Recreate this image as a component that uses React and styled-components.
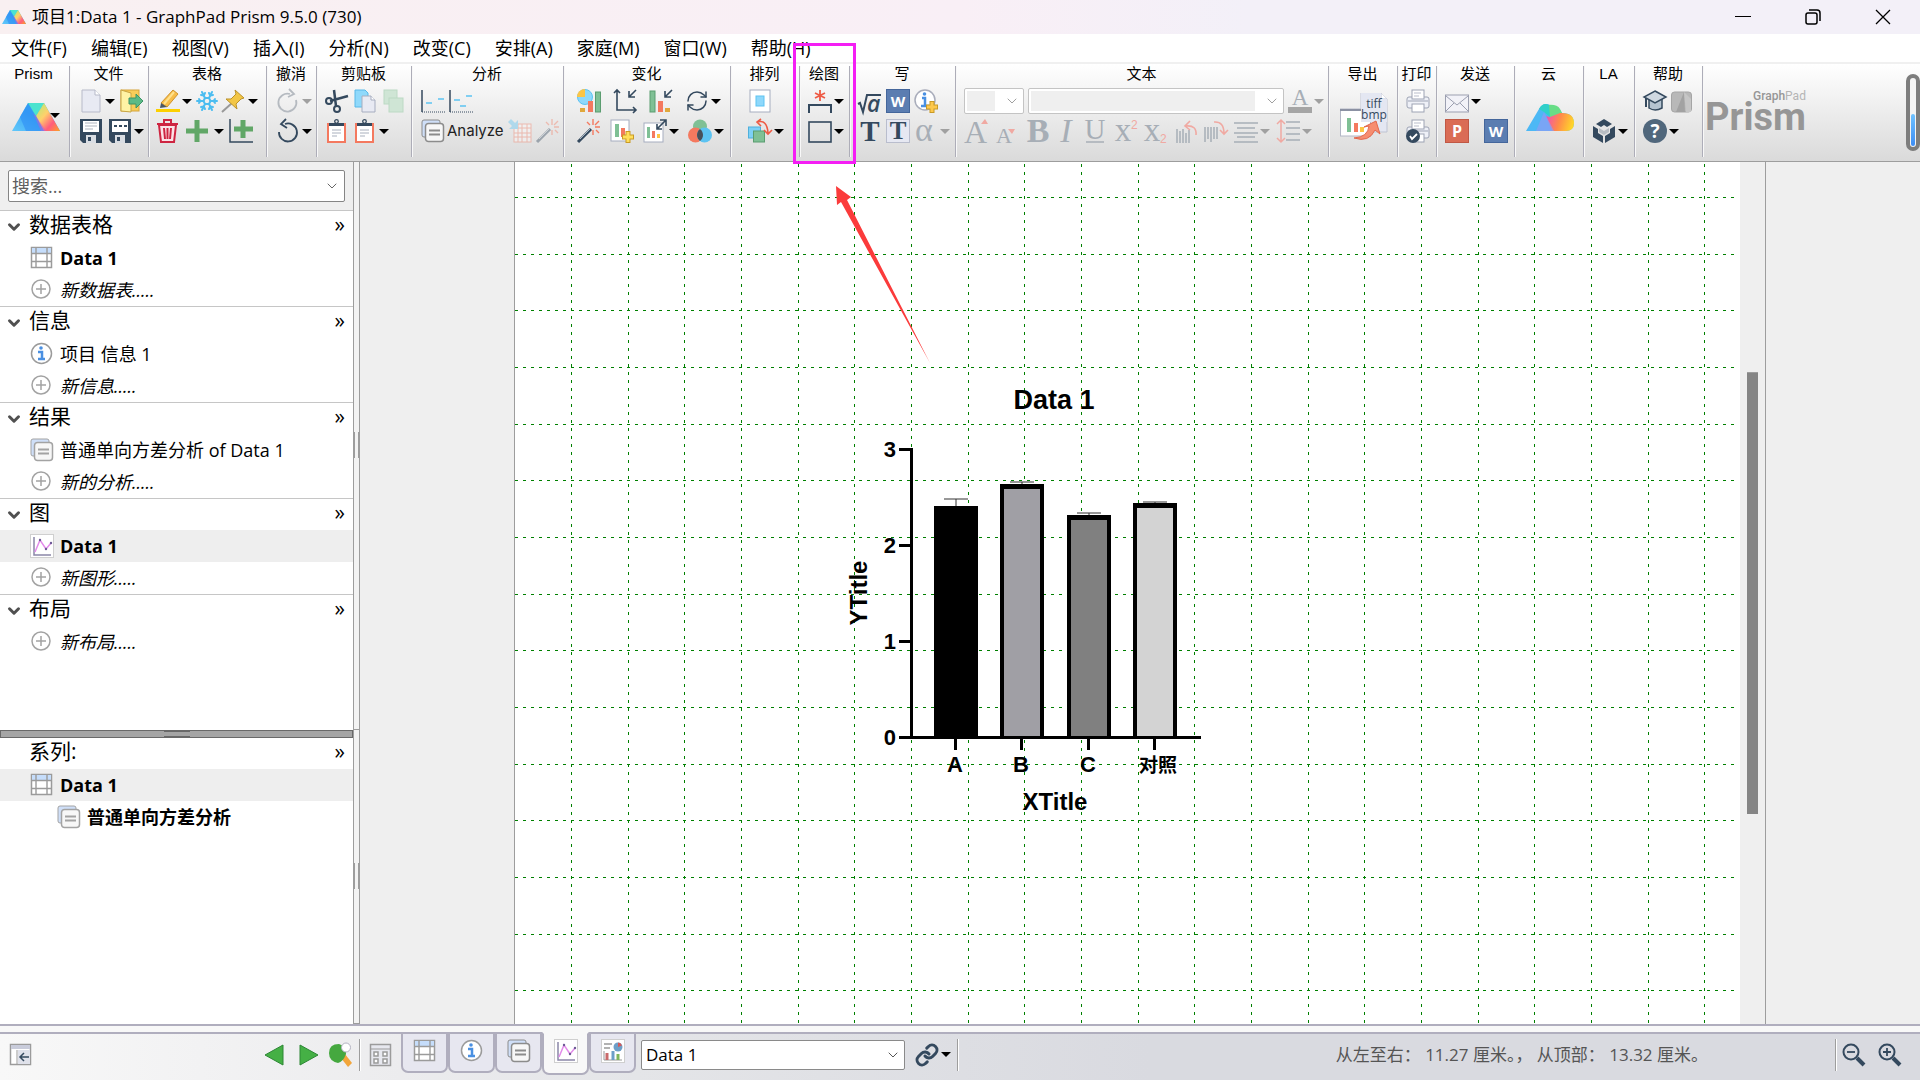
import React from "react";
import styled, { createGlobalStyle, css } from "styled-components";
import { ChevronDown, Link, RefreshCw, Snowflake } from "lucide-react";

const SANS = `"Open Sans", "Noto Sans", "Noto Sans CJK SC", sans-serif`;
const LABEL = `"Liberation Sans", "Noto Sans CJK SC", sans-serif`;

const INK = "#34495e";
const GREEN = "#7fc095";
const CORAL = "#f4795f";
const SKY = "#5cc3f2";
const GOLD = "#fdc544";

const GlobalStyle = createGlobalStyle`
  * {
    box-sizing: border-box;
  }
  body {
    margin: 0;
    font-family: ${SANS};
    color: #000;
  }
  button {
    padding: 0;
    border: 0;
    background: none;
    font: inherit;
    color: inherit;
  }
`;

/* ---------- drawings ---------- */

const PrismMark = () => (
  <>
    <defs>
      <linearGradient id="pmBlue" x1="0" y1="1" x2="1" y2="0">
        <stop offset="0" stopColor="#62c8fa" />
        <stop offset="0.5" stopColor="#3aa5f5" />
        <stop offset="1" stopColor="#33d6e0" />
      </linearGradient>
      <linearGradient id="pmWarm" x1="0" y1="0" x2="1" y2="1">
        <stop offset="0" stopColor="#a8f07a" />
        <stop offset="0.4" stopColor="#ffd06b" />
        <stop offset="0.7" stopColor="#ff5d7d" />
        <stop offset="1" stopColor="#ffa321" />
      </linearGradient>
    </defs>
    <path d="M16 0H32L48 28H0Z" fill="url(#pmBlue)" />
    <path d="M16 0H32L24 13Z" fill="#4be3cf" />
    <path d="M32 0L48 28H32L24 13Z" fill="url(#pmWarm)" />
    <path d="M16 0L32 28H14L8 14Z" fill="#2f8df5" opacity="0.6" />
    <path d="M24 13L34 28H29L21 10Z" fill="#c05bd8" opacity="0.5" />
  </>
);

const PrismCloud = () => (
  <>
    <defs>
      <linearGradient id="pcWarm" x1="0" y1="0.2" x2="1" y2="0.4">
        <stop offset="0" stopColor="#ef4fb8" />
        <stop offset="0.5" stopColor="#ff8a4a" />
        <stop offset="1" stopColor="#ffd52a" />
      </linearGradient>
    </defs>
    <path d="M13 6Q17-1 24 2Q33 3 36 10Q48 10 48 21Q47 28 40 28H0Z" fill="#4db8f5" />
    <path d="M22 2Q31 1 34 6L36 10L24 16Z" fill="#67dd86" />
    <path d="M24 14L34 10Q48 9 48 20Q48 28 40 28H26L20 13Z" fill="url(#pcWarm)" />
    <path d="M13 6Q17-1 23 2L24 14L18 9Z" fill="#30d0c9" />
    <path d="M18 9L28 28H10Z" fill="#8b9df5" opacity="0.7" />
  </>
);

const letter = (text, color, extra) => (
  <text x="12" y="22" textAnchor="middle" fontFamily="Liberation Serif, serif" fontSize="29" fill={color} {...extra}>
    {text}
  </text>
);

const printer = (
  <>
    <rect x="1" y="8" width="22" height="11" rx="2" fill="#eef0f7" stroke="#9da3b4" />
    <rect x="6" y="1" width="12" height="9" fill="#fff" stroke="#9da3b4" />
    <path d="M8 4h7M8 7h5" stroke="#b9bdca" />
    <path d="M2 12h20" stroke="#9da3b4" />
    <rect x="6" y="15" width="12" height="8" fill="#fff" stroke="#9da3b4" />
  </>
);

const clipboard = (
  <>
    <rect x="3" y="5" width="17" height="18" fill="#fff" stroke={CORAL} strokeWidth="2" />
    <rect x="4" y="4" width="15" height="3" fill={INK} />
    <circle cx="11.5" cy="2.5" r="1.8" fill="none" stroke={INK} strokeWidth="1.3" />
    <path d="M7 11h9M7 14h9M7 17h5" stroke="#a9b0bd" />
  </>
);

const sheets = (line) => (
  <>
    <rect x="1" y="1" width="18" height="17" rx="2" fill="#cfdff8" stroke={line} />
    <rect x="4.5" y="4.5" width="18" height="18" rx="3" fill="#f7f7f7" stroke={line} strokeWidth="1.5" />
    <path d="M8 11.5h11M8 15.5h11" stroke={line} strokeWidth="2" />
  </>
);

const wand = (
  <>
    <path d="M1 23L14 10" stroke={INK} strokeWidth="3" />
    <path d="M3 20L13 10" stroke="#aab6c2" />
    <path d="M16 0v6M23 8h-5M22 2l-4 4M10 3l3 3M16 16v-5M22 14l-3-3" stroke={CORAL} strokeWidth="1.4" />
  </>
);

const floppy = (
  <>
    <path d="M1 0h22v24H4l-3-3z" fill={INK} />
    <rect x="4" y="2" width="16" height="11" fill="#fff" />
    <rect x="7" y="16" width="10" height="8" fill="#d9dde3" />
    <rect x="9" y="18" width="3" height="4" fill={INK} />
  </>
);

const glyphs = {
  page: (
    <>
      <path d="M3 1h13l5 5v17H3z" fill="#e8eaf3" stroke="#b7bac9" />
      <path d="M16 1v5h5" fill="#fff" stroke="#b7bac9" />
    </>
  ),
  open: (
    <>
      <rect x="2" y="1" width="18" height="21" fill="#f9cd59" stroke="#d5a43a" />
      <path d="M2 1l10 3v19L2 22z" fill="#fff3a5" stroke="#c7a544" />
      <path d="M10 9h7V5l7 7-7 7v-4h-7z" fill="#5cba86" stroke="#3c9467" />
    </>
  ),
  save: (
    <>
      {floppy}
      <path d="M6 4h12M6 7h12M6 10h8" stroke="#aeb4be" />
    </>
  ),
  saveAs: (
    <>
      {floppy}
      <path d="M6 7h3M11 7h3M16 7h3" stroke={INK} strokeWidth="2" />
    </>
  ),
  marker: (
    <>
      <path d="M17 1l5 4L11 18l-6-4z" fill="#f8bd49" stroke="#cf932c" />
      <path d="M5 14l6 4-7 1z" fill="#4c5763" />
      <path d="M18 3L8 15" stroke="#ffe18c" strokeWidth="2" />
      <rect y="20" width="24" height="3" fill="#fcd000" />
    </>
  ),
  pin: (
    <>
      <path d="M10 14L0 23" stroke="#999" strokeWidth="2" />
      <path d="M13 1l9 8-3 1-5 5 1 5L4 10h5l5-5z" fill="#f2c646" stroke="#bb922b" />
    </>
  ),
  trash: (
    <>
      <path d="M3 6h17l-2 17H5z" fill="#fbe3e7" stroke="#ce2541" strokeWidth="2" />
      <path d="M1 5h21M8 4V1h7v3M8 9l1 11M11.5 9v11M15 9l-1 11" stroke="#ce2541" strokeWidth="2" fill="none" />
    </>
  ),
  plus: <path d="M12 1v22M1 12h22" stroke="#61a767" strokeWidth="5" />,
  axisPlus: (
    <>
      <path d="M1 0v23h23" fill="none" stroke={INK} strokeWidth="1.5" />
      <path d="M14 1v18M5 10h19" stroke="#61a767" strokeWidth="5" />
    </>
  ),
  redo: (
    <>
      <path d="M20 11A9 9 0 1 1 14 5" fill="none" stroke="#b5bac0" strokeWidth="1.8" />
      <path d="M13 0l5 5-6 3" fill="none" stroke="#b5bac0" strokeWidth="1.8" />
    </>
  ),
  undo: (
    <>
      <path d="M3 13A9 9 0 1 0 9 5" fill="none" stroke={INK} strokeWidth="1.8" />
      <path d="M10 0L5 5l6 4" fill="none" stroke={INK} strokeWidth="1.8" />
    </>
  ),
  cut: (
    <>
      <path d="M5 12L23 7M11 17L9 1" stroke={INK} strokeWidth="2.5" />
      <circle cx="4" cy="12" r="3" fill="none" stroke={INK} strokeWidth="2" />
      <circle cx="12" cy="20" r="3" fill="none" stroke={INK} strokeWidth="2" />
    </>
  ),
  copy: (
    <>
      <path d="M2 1h10l3 3v14H2z" fill="#8fd9fb" stroke="#58b8e8" />
      <path d="M9 7h9l4 4v12H9z" fill="#e8eaf3" stroke="#a6adbf" />
      <path d="M18 7v4h4" fill="#fff" stroke="#a6adbf" />
    </>
  ),
  duplicate: (
    <>
      <rect x="3" y="1" width="13" height="14" fill="#cfe5d5" stroke="#bcd9c4" />
      <rect x="8" y="9" width="14" height="14" fill="#cfe5d5" stroke="#bcd9c4" />
    </>
  ),
  clipboard,
  plotOne: (
    <>
      <path d="M1 1v22" stroke={INK} strokeWidth="1.5" />
      <path d="M1 23h23" stroke={INK} strokeDasharray="1 1" />
      <path d="M5 14h6M17 10h6" stroke={SKY} strokeWidth="1.5" />
    </>
  ),
  plotTwo: (
    <>
      <path d="M1 1v22" stroke={INK} strokeWidth="1.5" />
      <path d="M1 23h23" stroke={INK} strokeDasharray="1 1" />
      <path d="M5 11h6M11 17h6M17 7h6" stroke={SKY} strokeWidth="1.5" />
    </>
  ),
  sheets: sheets("#8c8c8c"),
  results: sheets("#a3a3a3"),
  gridFill: (
    <g opacity="0.4">
      <rect x="6" y="5" width="17" height="18" fill="#fff" stroke={CORAL} />
      <path d="M6 9h17M6 14h17M6 18h17M10 5v18M14 5v18M19 5v18" stroke={CORAL} />
      <path d="M0 3l3-3 4 4 3-3v9H1l3-3z" fill={SKY} />
    </g>
  ),
  wand,
  wandOff: <g opacity="0.4">{wand}</g>,
  chartMix: (
    <>
      <circle cx="8" cy="8" r="7.5" fill="#8ed8fb" stroke={SKY} />
      <path d="M8 8V0A8 8 0 0 0 0 8z" fill={GOLD} />
      <rect x="3" y="19" width="5" height="4" fill="#e0a83c" />
      <rect x="11" y="12" width="5" height="11" fill={CORAL} />
      <rect x="18.5" y="3" width="5" height="20" fill={GREEN} stroke="#5b9d70" />
    </>
  ),
  axes: (
    <g fill="none" stroke={INK} strokeWidth="1.6">
      <path d="M4 1v20h19M1 4l3-3 3 3M20 18l3 3-3 3M23 1l-7 7M16 2v6h6" />
    </g>
  ),
  barArrow: (
    <>
      <rect x="1" y="2" width="5" height="21" fill={GREEN} stroke="#5b9d70" />
      <rect x="9" y="12" width="5" height="11" fill={CORAL} />
      <rect x="16" y="19" width="5" height="4" fill="#e0a83c" />
      <path d="M23 1l-7 7M16 2v6h6" fill="none" stroke={INK} strokeWidth="1.6" />
    </>
  ),
  graphAdd: (
    <>
      <rect x="1" y="1" width="18" height="21" fill="#fff" stroke="#a6adbf" />
      <rect x="5" y="5" width="4" height="13" fill={GREEN} />
      <rect x="11" y="9" width="4" height="9" fill={CORAL} />
      <path d="M18 12v12M12 18h12" stroke="#c99a25" strokeWidth="5" />
      <path d="M18 13v10M13 18h10" stroke="#ffdf5b" strokeWidth="3" />
    </>
  ),
  graphResize: (
    <>
      <rect x="1" y="4" width="19" height="19" fill="#fff" stroke="#a6adbf" />
      <rect x="4" y="8" width="3" height="11" fill={GREEN} />
      <rect x="9" y="12" width="3" height="7" fill={CORAL} />
      <rect x="14" y="15" width="3" height="4" fill={GOLD} />
      <path d="M14 10L23 1M17 1h6v6M14 5v5h5" fill="none" stroke={INK} strokeWidth="1.6" />
    </>
  ),
  venn: (
    <>
      <circle cx="12" cy="7.5" r="7" fill={GREEN} />
      <circle cx="7.5" cy="16" r="7.5" fill={CORAL} />
      <circle cx="16.5" cy="16" r="7.5" fill={SKY} />
      <path d="M12 10a7.5 7.5 0 0 1 0 12a7.5 7.5 0 0 1 0-12z" fill="#47505a" />
    </>
  ),
  frame: (
    <>
      <rect x="2" y="1" width="20" height="22" fill="#fff" stroke="#a6adbf" />
      <rect x="8" y="7" width="8" height="10" fill="#8ed8fb" stroke={SKY} />
    </>
  ),
  rotate: (
    <>
      <rect x="0.5" y="8" width="12" height="11" fill="#7dd0f6" stroke="#4fb0dc" />
      <rect x="5.5" y="12" width="11" height="11" fill={GREEN} stroke="#5b9d70" />
      <path d="M9 3Q19 0 20 14M16 11l4 4 4-4M13 0L9 3l4 4" fill="none" stroke="#ee5a44" strokeWidth="1.6" />
    </>
  ),
  bracket: (
    <>
      <path d="M1 24v-8h22v8" fill="none" stroke={INK} strokeWidth="2" />
      <path d="M12 1v11M7 4l10 5M17 4L7 9" stroke="#ee5a44" strokeWidth="1.8" />
    </>
  ),
  rect: <rect x="1" y="3" width="22" height="20" fill="none" stroke={INK} strokeWidth="1.6" />,
  root: (
    <>
      <path d="M0 15l2-1 3 9L9 6h14" fill="none" stroke={INK} strokeWidth="2" />
      <text x="9" y="23" fontFamily="Open Sans, sans-serif" fontSize="23" fontStyle="italic" fontWeight="600" fill={INK}>
        a
      </text>
    </>
  ),
  word: (
    <>
      <rect width="24" height="24" fill="#44669b" />
      <rect x="1" y="1" width="22" height="22" fill="#5b7db1" />
      <text x="12" y="18" textAnchor="middle" fontFamily="Open Sans, sans-serif" fontSize="15" fontWeight="bold" fill="#fff">
        W
      </text>
    </>
  ),
  ppt: (
    <>
      <rect width="24" height="24" fill="#c05845" />
      <rect x="1" y="1" width="22" height="22" fill="#da6c55" />
      <text x="12" y="18" textAnchor="middle" fontFamily="Open Sans, sans-serif" fontSize="16" fontWeight="bold" fill="#fff">
        P
      </text>
    </>
  ),
  infoAdd: (
    <>
      <circle cx="11" cy="11" r="10" fill="#fff" stroke="#a9adbb" strokeWidth="1.5" />
      <circle cx="10.5" cy="5" r="1.8" fill="#4a90e2" />
      <path d="M8 9h3v8M7 17h8" stroke="#4a90e2" strokeWidth="2.5" fill="none" />
      <path d="M18 12v12M12 18h12" stroke="#c99a25" strokeWidth="5" />
      <path d="M18 13v10M13 18h10" stroke="#fdc84c" strokeWidth="3" />
    </>
  ),
  text: letter("T", INK, { fontWeight: "bold" }),
  textBox: (
    <>
      <rect x="0.5" y="0.5" width="23" height="23" fill="#e6e8f2" stroke="#b9bdcd" />
      <text x="12" y="20" textAnchor="middle" fontFamily="Liberation Serif, serif" fontSize="25" fontWeight="bold" fill={INK}>
        T
      </text>
    </>
  ),
  alpha: letter("α", "#a7aeb6", { x: 10, fontSize: 34 }),
  fontColor: (
    <>
      <text x="12" y="16" textAnchor="middle" fontFamily="Liberation Serif, serif" fontSize="23" fill="#a7aeb6">
        A
      </text>
      <rect y="18" width="24" height="6" fill="#a5a5a5" />
    </>
  ),
  grow: (
    <>
      <text x="0" y="24" fontFamily="Liberation Serif, serif" fontSize="32" fill="#a7aeb6">
        A
      </text>
      <path d="M17 5l4-5 3 5z" fill="#f0a9a2" />
    </>
  ),
  shrink: (
    <>
      <text x="2" y="24" fontFamily="Liberation Serif, serif" fontSize="22" fill="#a7aeb6">
        A
      </text>
      <path d="M14 10h7l-3 5z" fill="#f0a9a2" />
    </>
  ),
  bold: letter("B", "#a7aeb6", { fontWeight: "bold", x: 14, y: 23, fontSize: 34 }),
  italic: letter("I", "#a7aeb6", { fontStyle: "italic", y: 23, fontSize: 34 }),
  underline: (
    <>
      {letter("U", "#a7aeb6", { x: 11, y: 20 })}
      <path d="M2 23h18" stroke="#a7aeb6" strokeWidth="1.5" />
    </>
  ),
  sup: (
    <>
      {letter("x", "#a7aeb6", { x: 9, fontSize: 33 })}
      <text x="17" y="10" fontFamily="Liberation Sans, sans-serif" fontSize="12" fill="#f0a9a2">
        2
      </text>
    </>
  ),
  sub: (
    <>
      {letter("x", "#a7aeb6", { x: 8, fontSize: 33 })}
      <text x="16" y="24" fontFamily="Liberation Sans, sans-serif" fontSize="12" fill="#f0a9a2">
        2
      </text>
    </>
  ),
  turnLeft: (
    <>
      <path d="M3 10v14M6 12v12M9 10v14M12 14v10M15 11v13" stroke="#a7aeb6" strokeWidth="1.5" />
      <path d="M22 16Q23 6 12 7M16 2l-5 5 5 4" fill="none" stroke="#f0a9a2" strokeWidth="1.6" />
    </>
  ),
  turnRight: (
    <>
      <path d="M1 8v15M4 8v12M7 8v15M10 8v12M13 8v12" stroke="#a7aeb6" strokeWidth="1.5" />
      <path d="M10 3Q20 2 20 15M16 11l4 4 4-4" fill="none" stroke="#f0a9a2" strokeWidth="1.6" />
    </>
  ),
  align: <path d="M0 4h24M3 9h18M0 14h24M3 18h18M0 23h24" stroke="#a7aeb6" strokeWidth="1.5" />,
  spacing: (
    <>
      <path d="M10 3h14M10 9h14M10 15h14M10 21h14" stroke="#a7aeb6" strokeWidth="1.5" />
      <path d="M5 1v22M1 5l4-4 4 4M1 19l4 4 4-4" fill="none" stroke="#f0a9a2" strokeWidth="1.5" />
    </>
  ),
  printer,
  printCheck: (
    <>
      {printer}
      <circle cx="7" cy="17" r="7" fill={INK} />
      <path d="M4 17l2 3 5-5" fill="none" stroke="#fff" strokeWidth="1.8" />
    </>
  ),
  mail: (
    <>
      <rect x="0.5" y="6" width="23" height="17" fill="#f2f2f8" stroke="#9b9fb0" />
      <path d="M1 7l11 9L23 7M1 22l8-8M23 22l-8-8" fill="none" stroke="#9b9fb0" />
    </>
  ),
  cube: (
    <>
      <path d="M12 0l8 5-5 3-3-2-3 2-5-3z" fill={INK} />
      <path d="M1 7l5 3v4l5 3v7L1 18zM23 7l-5 3v4l-5 3v7l10-6z" fill={INK} />
      <path d="M7 9l5 3 5-3v4l-5 3-5-3z" fill={INK} opacity="0.25" />
    </>
  ),
  cap: (
    <>
      <path d="M6 10v9q6 4 13 0v-9" fill="#b6c4d1" stroke={INK} strokeWidth="1.5" />
      <path d="M12 2l11 6-11 6L1 8z" fill="#cfd8e1" stroke={INK} strokeWidth="1.5" />
      <path d="M3 9v9" stroke={INK} strokeWidth="2" />
    </>
  ),
  gem: (
    <>
      <rect x="0.5" y="3" width="20" height="20" rx="3" fill="#b8b8b8" stroke="#a5a5a5" />
      <path d="M13 3L5 23h9z" fill="#a2a2a2" />
      <path d="M13 3l2 20h5V10z" fill="#c6c6c6" />
    </>
  ),
  help: (
    <>
      <circle cx="12" cy="12" r="12" fill="#50677c" />
      <text x="12" y="19" textAnchor="middle" fontFamily="Open Sans, sans-serif" fontSize="19" fontWeight="bold" fill="#fff">
        ?
      </text>
    </>
  ),
  table: (
    <>
      <rect x="1.5" y="1.5" width="20" height="20" fill="#fff" stroke="#9b9b9b" strokeWidth="1.5" />
      <rect x="2" y="2" width="19" height="5" fill="#c5ddfb" />
      <path d="M6 1v21M17 1v21M1 7.5h21M1 15.5h21" stroke="#9b9b9b" strokeWidth="1.4" />
    </>
  ),
  add: (
    <>
      <circle cx="11" cy="11" r="9" fill="#fff" stroke="#a3a3a3" strokeWidth="1.5" />
      <path d="M11 6v10M6 11h10" stroke="#a3a3a3" strokeWidth="1.5" />
    </>
  ),
  info: (
    <>
      <circle cx="11.5" cy="11.5" r="10" fill="#fff" stroke="#9b9b9b" strokeWidth="1.5" />
      <circle cx="11" cy="6" r="1.8" fill="#4a90e2" />
      <path d="M8 10h4v7M8 17h7" stroke="#4a90e2" strokeWidth="2.5" fill="none" />
    </>
  ),
  graph: (
    <>
      <rect x="0.5" y="0.5" width="23" height="23" fill="#fff" stroke="#cfcfcf" />
      <path d="M4 3v18h17" fill="none" stroke="#8b86a8" strokeWidth="1.5" />
      <path d="M5 18l5-12 6 9 5-6" fill="none" stroke="#e28bea" strokeWidth="1.5" />
      <circle cx="10" cy="6" r="1.2" fill="#6d5a95" />
      <circle cx="16" cy="15" r="1.2" fill="#6d5a95" />
      <circle cx="21" cy="9" r="1.2" fill="#6d5a95" />
    </>
  ),
  layout: (
    <>
      <rect x="0.5" y="0.5" width="23" height="23" fill="#fff" stroke="#cfcfcf" />
      <circle cx="17" cy="8" r="4.5" fill="#6d9fc8" />
      <path d="M17 8V3.5a4.5 4.5 0 0 1 4 3z" fill="#d25a5a" />
      <path d="M3 5h8M3 9h6" stroke="#999" strokeWidth="1.5" />
      <path d="M3 12v9h18" stroke="#999" fill="none" />
      <path d="M6 14v7" stroke="#c96a6a" strokeWidth="3" />
      <path d="M12 12v9" stroke="#6d9fc8" strokeWidth="3" />
      <path d="M17 15v6" stroke="#7eb55d" strokeWidth="3" />
    </>
  ),
  collapse: (
    <>
      <rect x="1.5" y="1.5" width="20" height="20" fill="#fff" stroke="#9b9b9b" strokeWidth="1.5" />
      <path d="M2 4h19" stroke="#c9ccdb" strokeWidth="4" />
      <path d="M8 7v14" stroke="#9b9b9b" />
      <rect x="9" y="7" width="12" height="14" fill="#dfe1ea" />
      <path d="M20 14h-9M15 10l-4 4 4 4" fill="none" stroke={INK} strokeWidth="1.5" />
    </>
  ),
  prev: <path d="M20 2v20L2 12z" fill="#45b045" stroke="#2d8735" />,
  next: <path d="M5 2v20L23 12z" fill="#45b045" stroke="#2d8735" />,
  paddle: (
    <>
      <path d="M14 15l4-4 7 9-4 4z" fill="#f2a53b" />
      <path d="M2 10Q2 1 12 1Q20 3 19 11Q16 19 11 20Q2 18 2 10z" fill="#45a83f" />
      <circle cx="19" cy="4.5" r="4.5" fill="#fff" stroke="#b3b3c2" />
    </>
  ),
  calendar: (
    <>
      <rect x="1.5" y="1.5" width="20" height="21" fill="#e7e8ef" stroke="#9b9b9b" strokeWidth="1.5" />
      <path d="M2 6h19" stroke="#9b9b9b" />
      <path d="M5 9h4v4H5zM14 9h4v4h-4zM5 16h4v4H5zM14 16h4v4h-4z" fill="#fff" stroke="#9b9b9b" strokeWidth="1.5" />
    </>
  ),
  zoomOut: (
    <>
      <circle cx="9" cy="9" r="7.5" fill="none" stroke={INK} strokeWidth="2" />
      <path d="M5 9h8" stroke={INK} strokeWidth="1.8" />
      <path d="M15 15l7 7" stroke={INK} strokeWidth="4" />
    </>
  ),
  zoomIn: (
    <>
      <circle cx="9" cy="9" r="7.5" fill="none" stroke={INK} strokeWidth="2" />
      <path d="M5 9h8M9 5v8" stroke={INK} strokeWidth="1.8" />
      <path d="M15 15l7 7" stroke={INK} strokeWidth="4" />
    </>
  ),
};

const Svg = styled.svg`
  display: block;
  flex: none;
`;

const Icon = ({ name }) => (
  <Svg width="24" height="24" viewBox="0 0 24 24" overflow="visible">
    {glyphs[name]}
  </Svg>
);

/* ---------- window frame ---------- */

const Window = styled.div`
  display: flex;
  flex-direction: column;
  height: 100vh;
  min-height: 900px;
  overflow: hidden;
  background: #efefef;
`;

const TitleBar = styled.header`
  display: flex;
  align-items: center;
  height: 34px;
  padding: 0 29px 0 2px;
  background: linear-gradient(90deg, #f9f0f1 0%, #f9eff6 50%, #f3f0f8 65%);
`;

const WindowTitle = styled.h1`
  flex: 1;
  margin: 0 0 0 6px;
  font-size: 17px;
  line-height: 24px;
  font-weight: 400;
`;

const WindowButtons = styled.div`
  display: flex;
  gap: 54px;
  & svg {
    display: block;
    fill: none;
    stroke: #000;
  }
`;

const MenuBar = styled.nav`
  display: flex;
  align-items: center;
  gap: 24px;
  height: 30px;
  padding: 0 11px;
  background: #fff;
  border-bottom: 2px solid #f0f0f0;
`;

const MenuButton = styled.button`
  font-size: 18px;
  line-height: 24px;
  white-space: nowrap;
`;

const menus = [
  "文件(F)",
  "编辑(E)",
  "视图(V)",
  "插入(I)",
  "分析(N)",
  "改变(C)",
  "安排(A)",
  "家庭(M)",
  "窗口(W)",
  "帮助(H)",
];

/* ---------- ribbon ---------- */

const Ribbon = styled.div`
  display: flex;
  flex: none;
  height: 98px;
  background: linear-gradient(#ffffff, #f0f0f0 40%, #dadada);
  border-bottom: 1px solid #9d9d9d;
`;

const Group = styled.section`
  position: relative;
  flex: none;
  width: ${(props) => props.$width}px;
  padding-left: ${(props) => props.$pad}px;
  &::after {
    content: "";
    position: absolute;
    top: 2px;
    right: 0;
    bottom: 4px;
    width: 2px;
    background: linear-gradient(90deg, #adadb8 50%, #f8f8f8 50%);
  }
`;

const GroupTitle = styled.h2`
  margin: 0 4px 5px -${(props) => props.$pad}px;
  font-family: ${LABEL};
  font-size: 15px;
  line-height: 20px;
  font-weight: 400;
  text-align: center;
`;

const ToolRow = styled.div`
  display: flex;
  align-items: center;
  gap: ${(props) => props.$gap || 4}px;
  height: 24px;
  margin-bottom: 6px;
`;

const TallRow = styled(ToolRow)`
  height: 56px;
`;

const Tool = styled.button`
  position: relative;
  display: flex;
  align-items: center;
  gap: 2px;
`;

const Caret = styled.span`
  width: 10px;
  border: 5px solid transparent;
  border-top-color: ${(props) => (props.$off ? "#a0a0a0" : "#000")};
  border-bottom: 0;
`;

// sits on the slope of the big logo
const LogoCaret = styled(Caret)`
  position: absolute;
  top: 10px;
  right: 0;
`;

const AnalyzeText = styled.span`
  font-family: Inter, sans-serif;
  font-size: 15px;
  line-height: 24px;
  color: #222;
`;

const SelectBox = styled.span`
  position: relative;
  flex: none;
  width: ${(props) => props.$width}px;
  & > svg {
    position: absolute;
    top: 50%;
    right: 4px;
    transform: translateY(-50%);
    pointer-events: none;
  }
`;

const Select = styled.select`
  display: block;
  width: 100%;
  appearance: none;
  height: ${(props) => (props.$small ? 26 : 30)}px;
  padding: 0 4px;
  border: 1px solid ${(props) => (props.$small ? "#c4c4c4" : "#8a8a8a")};
  border-radius: 2px;
  background: #fff;
  color: #000;
  opacity: 1;
  font-family: ${SANS};
  font-size: 17px;
  ${(props) =>
    props.$small &&
    css`
      background: linear-gradient(#efefef, #efefef) 2px 2px / calc(100% - 30px) 20px no-repeat #fff;
    `}
`;

const Highlight = styled.div`
  position: absolute;
  z-index: 2;
  top: -21px;
  right: -5px;
  bottom: -3px;
  left: -8px;
  border: 3px solid #f41ef4;
  pointer-events: none;
`;

const Brand = styled.div`
  flex: 1;
  padding: 26px 0 0 1px;
  font-family: Roboto, sans-serif;
  color: #969696;
`;

const BrandInner = styled.div`
  display: grid;
  width: 98px;
  text-align: right;
`;

const BrandSmall = styled.span`
  font-size: 12px;
  line-height: 12px;
  font-weight: 500;
  & em {
    font-style: normal;
    font-weight: 400;
    color: #b4b4b4;
  }
`;

const BrandLarge = styled.span`
  font-size: 38px;
  line-height: 30px;
  font-weight: 700;
  text-align: left;
`;

const Gauge = styled.div`
  flex: none;
  display: flex;
  align-items: flex-end;
  width: 14px;
  height: 77px;
  margin-top: 10px;
  padding: 1px;
  border: 4px solid #7d7d7d;
  border-radius: 7px;
  background: #f4f4f4;
  &::after {
    content: "";
    width: 100%;
    height: 32px;
    border-radius: 2px;
    background: linear-gradient(#6fc2ff, #3c8df5);
  }
`;

// a trailing + draws a drop-down caret, a trailing - a disabled one
const groups = [
  { title: "文件", width: 79, pad: 8, rows: [{ gap: 4, items: ["page+", "open"] }, { gap: 5, items: ["save", "saveAs+"] }] },
  {
    title: "表格",
    width: 118,
    pad: 6,
    rows: [
      { gap: 3, items: ["marker+", "snow", "pin+"] },
      { gap: 5, items: ["trash", "plus", "caret", "axisPlus"] },
    ],
  },
  { title: "撤消", width: 50, pad: 8, rows: [{ items: ["redo-"] }, { items: ["undo+"] }] },
  { title: "剪贴板", width: 95, pad: 7, rows: [{ items: ["cut", "copy", "duplicate"] }, { items: ["clipboard", "clipboard+"] }] },
  { title: "分析", width: 152, pad: 8, rows: [{ items: ["plotOne", "plotTwo"] }, { items: ["analyze", "gridFill", "wandOff"] }] },
  {
    title: "变化",
    width: 167,
    pad: 12,
    rows: [
      { gap: 12, items: ["chartMix", "axes", "barArrow", "cycle+"] },
      { gap: 9, items: ["wand", "graphAdd", "graphResize+", "venn+"] },
    ],
  },
  { title: "排列", width: 69, pad: 16, rows: [{ items: ["frame"] }, { items: ["rotate+"] }] },
  { title: "绘图", width: 50, pad: 7, marked: true, rows: [{ items: ["bracket+"] }, { items: ["rect+"] }] },
  { title: "写", width: 106, pad: 7, rows: [{ items: ["root", "word", "infoAdd"] }, { items: ["text", "textBox", "alpha-"] }] },
  {
    title: "文本",
    width: 373,
    pad: 7,
    rows: [
      { items: ["fontSize", "fontName", "fontColor-"] },
      {
        gap: 6,
        items: ["grow", "shrink", "bold", "italic", "underline", "sup", "sub", "turnLeft", "turnRight", "align-", "spacing-"],
      },
    ],
  },
  { title: "导出", width: 69, pad: 10, tall: "export" },
  { title: "打印", width: 39, pad: 7, rows: [{ items: ["printer"] }, { items: ["printCheck"] }] },
  { title: "发送", width: 78, pad: 7, rows: [{ items: ["mail+"] }, { gap: 15, items: ["ppt", "word"] }] },
  { title: "云", width: 69, pad: 10, tall: "cloud" },
  { title: "LA", width: 51, pad: 7, rows: [{ items: [] }, { items: ["cube+"] }] },
  { title: "帮助", width: 68, pad: 7, rows: [{ items: ["cap", "gem"] }, { items: ["help+"] }] },
];

const ExportArt = () => (
  <Svg width="48" height="48" viewBox="0 0 48 48">
    <path d="M21 0h20l6 6v33H21z" fill="#e4e7f2" stroke="#bfc3d2" />
    <path d="M41 0v6h6" fill="#fff" stroke="#bfc3d2" />
    <rect x="0.5" y="16" width="30" height="27" fill="#fff" stroke="#b3b7c6" />
    <path d="M0 17h22" stroke="#8b91a3" strokeWidth="2" />
    <rect x="7" y="25" width="4" height="14" fill={GREEN} />
    <rect x="14" y="30" width="4" height="9" fill={CORAL} />
    <rect x="20" y="34" width="4" height="5" fill={GOLD} />
    <path d="M21 0h20v6h6v23H21z" fill="#e4e7f2" />
    <text x="34" y="15" textAnchor="middle" fontFamily="Open Sans, sans-serif" fontSize="12" fill={INK}>
      tiff
    </text>
    <text x="34" y="26" textAnchor="middle" fontFamily="Open Sans, sans-serif" fontSize="12" fill={INK}>
      bmp
    </text>
    <path d="M14 45q14-1 15-12l-5 1 12-6 4 13-5-4q-6 13-21 8z" fill="#f68d70" stroke="#e2674c" />
  </Svg>
);

const ToolItem = ({ id }) => {
  const caret = /[+-]$/.test(id);
  const name = id.replace(/[+-]$/, "");
  if (name === "caret") {
    return <Caret />;
  }
  if (name === "fontSize" || name === "fontName") {
    return (
      <SelectBox $width={name === "fontSize" ? 60 : 256}>
        <Select $small disabled aria-label={name} />
        <ChevronDown size={16} color="#a0a0a0" strokeWidth={1.5} />
      </SelectBox>
    );
  }
  return (
    <Tool type="button" aria-label={name}>
      {name === "snow" && <Snowflake size={24} color="#4cbdf0" strokeWidth={2} />}
      {name === "cycle" && <RefreshCw size={24} color={INK} strokeWidth={1.5} />}
      {name === "analyze" && (
        <>
          <Icon name="sheets" />
          <AnalyzeText>Analyze</AnalyzeText>
        </>
      )}
      {glyphs[name] && <Icon name={name} />}
      {caret && <Caret $off={id.endsWith("-")} />}
    </Tool>
  );
};

const RibbonBar = () => (
  <Ribbon>
    <Group $width={71} $pad={12}>
      <GroupTitle $pad={12}>Prism</GroupTitle>
      <TallRow>
        <Tool type="button" aria-label="Prism">
          <Svg width="48" height="28" viewBox="0 0 48 28">
            <PrismMark />
          </Svg>
          <LogoCaret />
        </Tool>
      </TallRow>
    </Group>
    {groups.map((group) => (
      <Group key={group.title} $width={group.width} $pad={group.pad}>
        <GroupTitle $pad={group.pad}>{group.title}</GroupTitle>
        {group.tall && (
          <TallRow>
            <Tool type="button" aria-label={group.tall}>
              {group.tall === "export" ? (
                <ExportArt />
              ) : (
                <Svg width="48" height="28" viewBox="0 0 48 28">
                  <PrismCloud />
                </Svg>
              )}
            </Tool>
          </TallRow>
        )}
        {group.rows &&
          group.rows.map((row, i) => (
            <ToolRow key={i} $gap={row.gap}>
              {row.items.map((id) => (
                <ToolItem key={id} id={id} />
              ))}
            </ToolRow>
          ))}
        {group.marked && <Highlight />}
      </Group>
    ))}
    <Brand>
      <BrandInner>
        <BrandSmall>
          Graph<em>Pad</em>
        </BrandSmall>
        <BrandLarge>Prism</BrandLarge>
      </BrandInner>
    </Brand>
    <Gauge />
  </Ribbon>
);

/* ---------- navigator ---------- */

const Main = styled.main`
  display: flex;
  flex: 1;
  min-height: 0;
`;

const Navigator = styled.aside`
  display: flex;
  flex-direction: column;
  flex: none;
  width: 353px;
  background: #fff;
`;

const SearchArea = styled.div`
  position: relative;
  padding: 8px;
  background: #efefef;
  border-bottom: 1px solid #c6c6c6;
  & > svg {
    position: absolute;
    top: 16px;
    right: 13px;
  }
`;

const SearchInput = styled.input`
  display: block;
  width: 100%;
  height: 32px;
  padding: 0 3px;
  border: 1px solid #858585;
  border-radius: 2px;
  background: #fff;
  font-family: ${SANS};
  font-size: 18px;
  &::placeholder {
    color: #606060;
    opacity: 1;
  }
`;

const Section = styled.section`
  border-bottom: ${(props) => (props.$last ? 0 : 1)}px solid #c6c6c6;
`;

const SectionHead = styled.div`
  display: flex;
  align-items: center;
  height: 31px;
  padding: 0 8px 0 5px;
`;

const SectionName = styled.h2`
  flex: 1;
  margin: 0 0 0 ${(props) => (props.$plain ? 24 : 6)}px;
  padding-bottom: 5px;
  font-size: 21px;
  line-height: 26px;
  font-weight: 400;
`;

const More = styled.button`
  padding-bottom: 5px;
  font-size: 21px;
  line-height: 26px;
`;

const Row = styled.button`
  display: flex;
  align-items: center;
  gap: 6px;
  width: 100%;
  height: 32px;
  padding: 0 0 1px ${(props) => (props.$deep ? 57 : 30)}px;
  background: ${(props) => (props.$active ? "#eeeeee" : "transparent")};
  font-size: 18px;
  line-height: 24px;
  font-weight: ${(props) => (props.$bold ? 700 : 400)};
  font-style: ${(props) => (props.$fresh ? "italic" : "normal")};
  text-align: left;
  white-space: nowrap;
`;

const SplitBar = styled.div`
  display: grid;
  place-items: center;
  height: 8px;
  margin-top: auto;
  border: 1px solid #696969;
  background: #a5a5a5;
  &::after {
    content: "";
    width: 26px;
    height: 4px;
    border: solid #696969;
    border-width: 1px 0;
  }
`;

const Upper = styled.div`
  display: flex;
  flex-direction: column;
  height: 527px;
`;

const Splitter = styled.div`
  display: flex;
  flex-direction: column;
  flex: none;
  width: 7px;
  border: solid #9d9d9d;
  border-width: 0 1px;
  background: #f3f3f3;
`;

const Grip = styled.div`
  display: grid;
  flex: ${(props) => props.$grow};
  place-items: center;
  border-bottom: 1px solid #9d9d9d;
  &::after {
    content: "";
    width: 3px;
    height: 26px;
    border: solid #9d9d9d;
    border-width: 0 1px;
  }
`;

const sections = [
  { name: "数据表格", rows: [{ icon: "table", text: "Data 1", bold: true }, { icon: "add", text: "新数据表....." }] },
  { name: "信息", rows: [{ icon: "info", text: "项目 信息 1" }, { icon: "add", text: "新信息....." }] },
  { name: "结果", rows: [{ icon: "results", text: "普通单向方差分析 of Data 1" }, { icon: "add", text: "新的分析....." }] },
  { name: "图", rows: [{ icon: "graph", text: "Data 1", bold: true, active: true }, { icon: "add", text: "新图形....." }] },
  { name: "布局", rows: [{ icon: "add", text: "新布局....." }] },
];

const NavRow = ({ row }) => (
  <Row type="button" $active={row.active} $bold={row.bold} $deep={row.deep} $fresh={row.icon === "add"}>
    <Icon name={row.icon} />
    {row.text}
  </Row>
);

const NavigatorPanel = () => (
  <Navigator>
    <SearchArea>
      <SearchInput type="search" aria-label="搜索" placeholder="搜索..." />
      <ChevronDown size={16} color="#666" strokeWidth={1.5} />
    </SearchArea>
    <Upper>
      {sections.map((section, i) => (
        <Section key={section.name} $last={i === sections.length - 1}>
          <SectionHead>
            <ChevronDown size={18} color="#505050" strokeWidth={4} />
            <SectionName>{section.name}</SectionName>
            <More type="button">»</More>
          </SectionHead>
          {section.rows.map((row) => (
            <NavRow key={row.text} row={row} />
          ))}
        </Section>
      ))}
      <SplitBar />
    </Upper>
    <Section $last>
      <SectionHead>
        <SectionName $plain>系列:</SectionName>
        <More type="button">»</More>
      </SectionHead>
      <NavRow row={{ icon: "table", text: "Data 1", bold: true, active: true }} />
      <NavRow row={{ icon: "results", text: "普通单向方差分析", bold: true, deep: true }} />
    </Section>
  </Navigator>
);

/* ---------- graph sheet ---------- */

const Margin = styled.div`
  flex: none;
  width: 155px;
  border-${(props) => props.$side}: 1px solid #9d9d9d;
`;

const Sheet = styled.div`
  flex: 1;
  min-width: 0;
  background: #fff;
`;

const Track = styled.div`
  display: flex;
  flex-direction: column;
  flex: none;
  width: 25px;
  padding: 0 7px;
`;

const Thumb = styled.div`
  flex: 441;
  background: #858585;
  border-top: 1px solid #9d9d9d;
`;

const TrackSpace = styled.div`
  flex: 210;
`;

const SheetSvg = styled.svg`
  display: block;
  width: 100%;
  height: 100%;
  font-family: "Liberation Sans", "Noto Sans CJK SC", sans-serif;
  font-weight: 700;
`;

const STEP = 170 / 3;
const bars = [
  { label: "A", x: 934, top: 506, cap: 499, fill: "#000" },
  { label: "B", x: 1000, top: 484, cap: 482, fill: "#a09fa5" },
  { label: "C", x: 1067, top: 515, cap: 513, fill: "#808080" },
  { label: "对照", x: 1133, top: 503, cap: 502, fill: "#d3d3d3" },
];

const GraphSheet = () => (
  <Sheet>
    <SheetSvg viewBox="515 162 1225 862" preserveAspectRatio="xMinYMin slice">
      <g stroke="#008000" strokeDasharray="3 5" shapeRendering="crispEdges">
        {Array.from({ length: 21 }, (_, i) => {
          const x = Math.round(571 + i * STEP) + 0.5;
          return <line key={x} x1={x} x2={x} y1="164" y2="1023" />;
        })}
        {Array.from({ length: 15 }, (_, i) => {
          const y = Math.round(197 + i * STEP) + 0.5;
          return <line key={y} x1="515" x2="1734" y1={y} y2={y} />;
        })}
      </g>

      <text x="1054" y="409" fontSize="27" textAnchor="middle">
        Data 1
      </text>
      {bars.map((bar) => (
        <g key={bar.label}>
          <path d={`M${bar.x + 10} ${bar.cap}h24M${bar.x + 22} ${bar.cap}V${bar.top}`} stroke="#333" fill="none" />
          <rect x={bar.x} y={bar.top} width="44" height={739 - bar.top} />
          <rect x={bar.x + 4} y={bar.top + 5} width="36" height={731 - bar.top} fill={bar.fill} />
          <rect x={bar.x + 20} y="738" width="3" height="12" />
          <text
            x={bar.label === "对照" ? 1158 : bar.x + 21}
            y="772"
            fontSize={bar.label === "对照" ? 19 : 22}
            textAnchor="middle"
          >
            {bar.label}
          </text>
        </g>
      ))}
      <path d="M899 736h302v3H899zM910 448h3v291h-3z" />
      {[3, 2, 1, 0].map((value, i) => (
        <g key={value}>
          <rect x="899" y={448 + i * 96} width="12" height="3" />
          <text x="896" y={457 + i * 96} fontSize="22" textAnchor="end">
            {value}
          </text>
        </g>
      ))}
      <text x="1055" y="810" fontSize="24" textAnchor="middle">
        XTitle
      </text>
      <text transform="translate(867 593) rotate(-90)" fontSize="24" textAnchor="middle">
        YTitle
      </text>

      <path d="M836 186L851 197L847 200L930 363L841 202L837 205Z" fill="#fb3b3b" />
    </SheetSvg>
  </Sheet>
);

/* ---------- status bar ---------- */

const StatusBar = styled.footer`
  flex: none;
  display: flex;
  height: 56px;
  padding-top: 6px;
  border-top: 2px solid #b0aebe;
  background: #f8f8f8;
`;

const StatusPart = styled.div`
  display: flex;
  align-items: center;
  height: 48px;
  border-top: 2px solid #b0aebe;
  background: ${(props) => props.$fill};
  ${(props) => (props.$grow ? "flex: 1;" : "flex: none;")}
`;

const LeftTools = styled(StatusPart)`
  width: 401px;
  padding: 0 8px 5px 9px;
  gap: 8px;
`;

const Push = styled.span`
  flex: 1;
`;

const Divider = styled.span`
  width: 2px;
  height: 32px;
  background: linear-gradient(90deg, #9d9d9d 50%, #fff 50%);
`;

const Tabs = styled.div`
  display: flex;
  flex: none;
  background: linear-gradient(90deg, #ececee, #e4e5e8);
`;

const Tab = styled.button`
  display: grid;
  place-items: center;
  width: 47px;
  height: ${(props) => (props.$active ? 43 : 41)}px;
  padding-bottom: ${(props) => (props.$active ? 5 : 3)}px;
  border: 2px solid #b0aebe;
  border-top-color: ${(props) => (props.$active ? "#f8f8f8" : "#b0aebe")};
  border-radius: 0 0 7px 7px;
  background: ${(props) => (props.$active ? "#f8f8f8" : "#e7e7f0")};
`;

const RightTools = styled(StatusPart)`
  padding: 0 18px 5px 5px;
`;

const LinkTool = styled(Tool)`
  margin: 0 6px 0 10px;
`;

const Coordinates = styled.p`
  margin: 0 127px 0 0;
  font-size: 17px;
  line-height: 24px;
  color: #555;
`;

const ZoomTools = styled.div`
  display: flex;
  gap: 12px;
  margin-left: 5px;
`;

const tabs = ["table", "info", "sheets", "graph", "layout"];

const App = () => {
  return (
    <Window>
      <GlobalStyle />
      <TitleBar>
        <Svg width="24" height="14" viewBox="0 0 48 28">
          <PrismMark />
        </Svg>
        <WindowTitle>项目1:Data 1 - GraphPad Prism 9.5.0 (730)</WindowTitle>
        <WindowButtons>
          <button type="button" aria-label="minimize">
            <svg width="16" height="16">
              <path d="M0 7.5h16" />
            </svg>
          </button>
          <button type="button" aria-label="restore">
            <svg width="16" height="16" strokeWidth="1.5">
              <rect x="1" y="4" width="11" height="11" rx="2" />
              <path d="M4 1h8q3 0 3 3v8" />
            </svg>
          </button>
          <button type="button" aria-label="close">
            <svg width="16" height="16" strokeWidth="1.3">
              <path d="M1 1l14 14M15 1L1 15" />
            </svg>
          </button>
        </WindowButtons>
      </TitleBar>
      <MenuBar>
        {menus.map((menu) => (
          <MenuButton key={menu} type="button">
            {menu}
          </MenuButton>
        ))}
      </MenuBar>
      <RibbonBar />
      <Main>
        <NavigatorPanel />
        <Splitter>
          <Grip $grow={568} />
          <Grip $grow={294} />
        </Splitter>
        <Margin $side="right" />
        <GraphSheet />
        <Track>
          <TrackSpace />
          <Thumb />
          <TrackSpace />
        </Track>
        <Margin $side="left" />
      </Main>
      <StatusBar>
        <LeftTools $fill="linear-gradient(90deg, #f8f8f8, #ececee)">
          <Tool type="button" aria-label="collapse">
            <Icon name="collapse" />
          </Tool>
          <Push />
          {["prev", "next", "paddle"].map((name) => (
            <Tool key={name} type="button" aria-label={name}>
              <Icon name={name} />
            </Tool>
          ))}
          <Divider />
          <Tool type="button" aria-label="calendar">
            <Icon name="calendar" />
          </Tool>
        </LeftTools>
        <Tabs>
          {tabs.map((name) => (
            <Tab key={name} type="button" aria-label={name} $active={name === "graph"}>
              <Icon name={name} />
            </Tab>
          ))}
        </Tabs>
        <RightTools $grow $fill="linear-gradient(90deg, #e4e5e8, #d9dae0 40%)">
          <SelectBox $width={264}>
            <Select aria-label="sheet" defaultValue="Data 1">
              <option>Data 1</option>
            </Select>
            <ChevronDown size={16} color="#555" strokeWidth={1.5} />
          </SelectBox>
          <LinkTool type="button" aria-label="link">
            <Link size={24} color={INK} strokeWidth={3} />
            <Caret />
          </LinkTool>
          <Divider />
          <Push />
          <Coordinates>从左至右： 11.27 厘米。， 从顶部： 13.32 厘米。</Coordinates>
          <Divider />
          <ZoomTools>
            <Tool type="button" aria-label="zoom out">
              <Icon name="zoomOut" />
            </Tool>
            <Tool type="button" aria-label="zoom in">
              <Icon name="zoomIn" />
            </Tool>
          </ZoomTools>
        </RightTools>
      </StatusBar>
    </Window>
  );
};

export default App;
